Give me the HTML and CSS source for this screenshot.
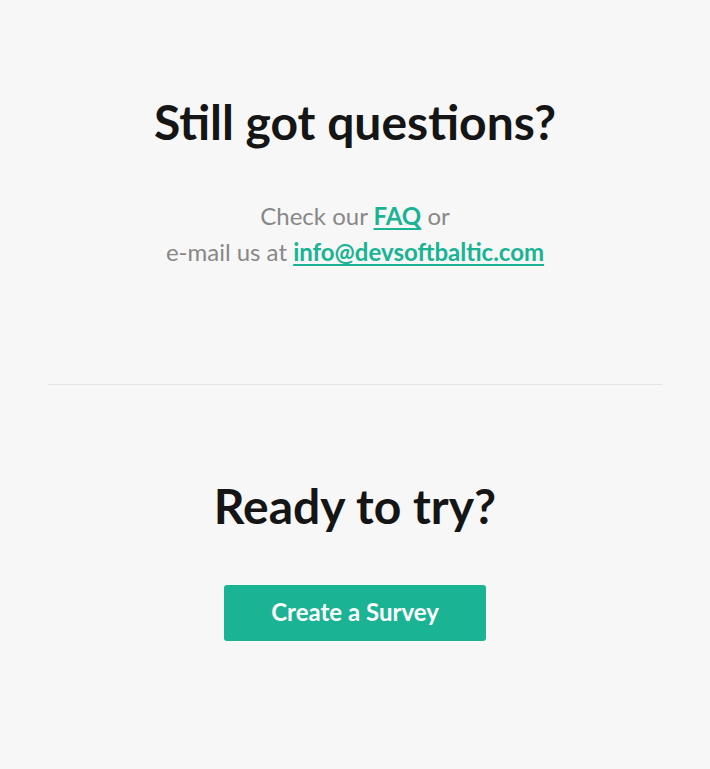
FILE: index.html
```html
<!DOCTYPE html>
<html>
<head>
<meta charset="utf-8">
<link rel="stylesheet" href="styles.css">
</head>
<body>
<section class="questions">
  <h2 class="title">Still got questions?</h2>
  <p class="text">Check our <a href="#">FAQ</a> or<br>e-mail us at <a href="#">info@devsoftbaltic.com</a></p>
</section>
<hr class="divider">
<section class="ready">
  <h2 class="title">Ready to try?</h2>
  <a class="btn" href="#">Create a Survey</a>
</section>
</body>
</html>
```
FILE: styles.css
```css
html, body {
  margin: 0;
  padding: 0;
  background: #f7f7f7;
  font-family: Lato, "Open Sans", sans-serif;
}
body {
  padding: 0 48px;
}
.questions, .ready {
  display: flex;
  flex-direction: column;
  align-items: center;
  text-align: center;
}
.questions {
  padding-top: 92px;
  padding-bottom: 114px;
}
.title {
  margin: 0;
  font-size: 48px;
  font-weight: 700;
  line-height: 60px;
  color: #151515;
}
.text {
  margin: 46px 0 0;
  font-size: 24px;
  line-height: 36px;
  color: #888888;
}
.text a {
  color: #1ab394;
  font-weight: 700;
  text-decoration: underline;
  text-underline-offset: 3px;
}
.divider {
  margin: 0;
  border: 0;
  height: 1px;
  background: #e4e4e4;
}
.ready {
  padding-top: 91px;
}
.btn {
  margin-top: 49px;
  width: 262px;
  height: 56px;
  box-sizing: border-box;
  padding-bottom: 3px;
  display: flex;
  align-items: center;
  justify-content: center;
  background: #1ab394;
  color: #fff;
  font-size: 24px;
  font-weight: 700;
  text-decoration: none;
  border-radius: 3px;
}
```
